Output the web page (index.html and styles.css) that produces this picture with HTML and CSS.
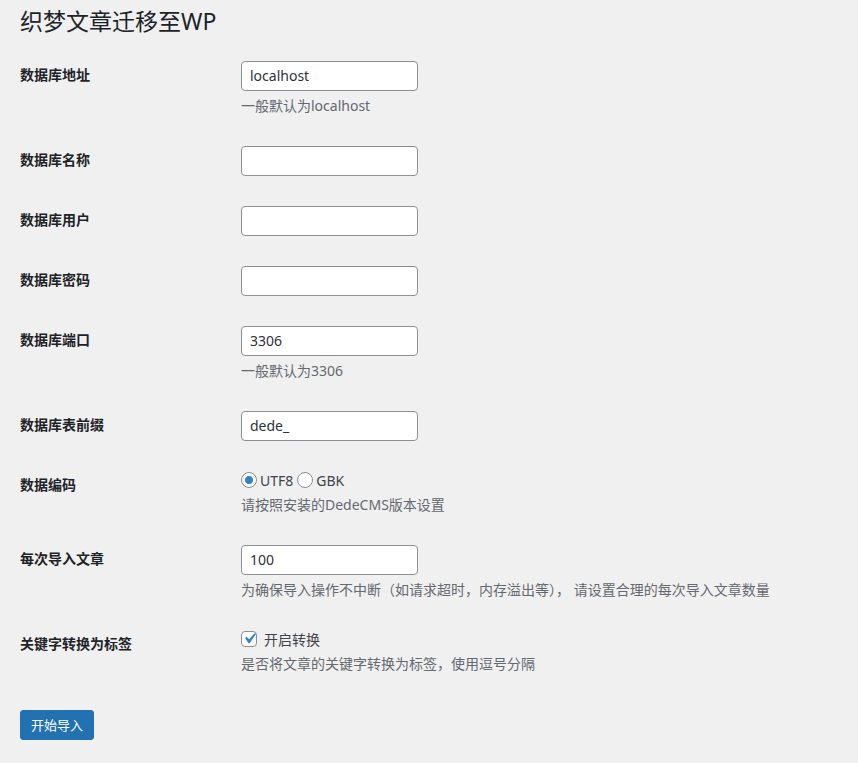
FILE: index.html
```html
<!DOCTYPE html>
<html lang="zh-CN">
<head>
<meta charset="utf-8">
<title>织梦文章迁移至WP</title>
<link rel="stylesheet" href="styles.css">
</head>
<body>
<div class="wrap">
  <h1 class="page-title">织梦文章迁移至WP</h1>
  <form class="import-form">
    <table class="form-table">
      <tbody>
        <tr>
          <th scope="row"><label>数据库地址</label></th>
          <td>
            <input class="field" type="text" value="localhost">
            <p class="description">一般默认为localhost</p>
          </td>
        </tr>
        <tr>
          <th scope="row"><label>数据库名称</label></th>
          <td><input class="field" type="text" value=""></td>
        </tr>
        <tr>
          <th scope="row"><label>数据库用户</label></th>
          <td><input class="field" type="text" value=""></td>
        </tr>
        <tr>
          <th scope="row"><label>数据库密码</label></th>
          <td><input class="field" type="password" value=""></td>
        </tr>
        <tr>
          <th scope="row"><label>数据库端口</label></th>
          <td>
            <input class="field" type="text" value="3306">
            <p class="description">一般默认为3306</p>
          </td>
        </tr>
        <tr>
          <th scope="row"><label>数据库表前缀</label></th>
          <td><input class="field" type="text" value="dede_"></td>
        </tr>
        <tr>
          <th scope="row"><label>数据编码</label></th>
          <td>
            <div class="choice-line"><label class="choice"><input class="radio" type="radio" name="charset" checked>UTF8</label> <label class="choice"><input class="radio" type="radio" name="charset">GBK</label></div>
            <p class="description">请按照安装的DedeCMS版本设置</p>
          </td>
        </tr>
        <tr>
          <th scope="row"><label>每次导入文章</label></th>
          <td>
            <input class="field" type="text" value="100">
            <p class="description">为确保导入操作不中断（如请求超时，内存溢出等）， 请设置合理的每次导入文章数量</p>
          </td>
        </tr>
        <tr>
          <th scope="row"><label>关键字转换为标签</label></th>
          <td>
            <div class="choice-line"><label class="choice"><span class="checkbox"><svg viewBox="0 0 20 20" width="20" height="20" aria-hidden="true"><path d="M14.83 4.89l1.34.94-5.81 8.38H9.02L5.78 9.67l1.34-1.25 2.57 2.4z" fill="#3582c4"/></svg></span> 开启转换</label></div>
            <p class="description">是否将文章的关键字转换为标签，使用逗号分隔</p>
          </td>
        </tr>
      </tbody>
    </table>
    <p class="submit"><button class="button-primary" type="button">开始导入</button></p>
  </form>
</div>
</body>
</html>
```

FILE: styles.css
```css
html, body {
  margin: 0;
  padding: 0;
  background: #f0f0f1;
}

body {
  color: #1d2327;
  font-family: "Noto Sans", "Noto Sans CJK SC", sans-serif;
  font-size: 13px;
  line-height: 1.4;
}

.wrap {
  padding: 0 20px;
}

.page-title {
  margin: 0 0 9px;
  padding: 7px 0 0;
  font-size: 23px;
  font-weight: 400;
  line-height: 1.3;
  color: #1d2327;
}

.import-form {
  margin: 0;
}

.form-table {
  border-collapse: collapse;
  border-spacing: 0;
  margin: 0;
  width: 100%;
  clear: both;
}

.form-table th {
  width: 201px;
  padding: 20px 10px 20px 0;
  text-align: left;
  vertical-align: top;
  font-size: 14px;
  font-weight: 600;
  line-height: 1.3;
  color: #1d2327;
}

.form-table td {
  padding: 15px 10px;
  vertical-align: top;
  font-size: 14px;
  line-height: 1.3;
}

.field {
  display: block;
  box-sizing: border-box;
  width: 177px;
  height: 30px;
  margin: 0;
  padding: 0 8px;
  border: 1px solid #8c8f94;
  border-radius: 4px;
  background: #fff;
  color: #2c3338;
  font-family: "Noto Sans", "Noto Sans CJK SC", sans-serif;
  font-size: 14px;
  line-height: 28px;
  box-shadow: 0 0 0 transparent;
  outline: none;
}

.description {
  margin: 4px 0 0;
  font-size: 14px;
  line-height: 21px;
  color: #646970;
}

.choice-line {
  display: flex;
  align-items: center;
  gap: 4px;
  height: 19px;
  line-height: 19px;
  color: #3c434a;
}

.choice {
  display: inline-flex;
  align-items: center;
}

.radio {
  appearance: none;
  -webkit-appearance: none;
  box-sizing: border-box;
  width: 16px;
  height: 16px;
  margin: 0 3px 0 0;
  border: 1px solid #8c8f94;
  border-radius: 50%;
  background: #fff;
  display: inline-flex;
  align-items: center;
  justify-content: center;
}

.radio:checked::before {
  content: "";
  width: 8px;
  height: 8px;
  border-radius: 50%;
  background: #3582c4;
}

.checkbox {
  box-sizing: border-box;
  width: 16px;
  height: 16px;
  margin-right: 7px;
  border: 1px solid #8c8f94;
  border-radius: 4px;
  background: #fff;
  display: inline-flex;
  align-items: center;
  justify-content: center;
  overflow: visible;
}

.checkbox svg {
  width: 21px;
  height: 21px;
  margin: -2px -3px 0 -3px;
  flex: none;
}

.submit {
  margin: 21px 0 0;
  padding: 0;
}

.button-primary {
  box-sizing: border-box;
  min-height: 30px;
  margin: 0;
  padding: 0 10px;
  border: 1px solid #2271b1;
  border-radius: 3px;
  background: #2271b1;
  color: #fff;
  font-family: "Noto Sans", "Noto Sans CJK SC", sans-serif;
  font-size: 13px;
  line-height: 28px;
  cursor: pointer;
}
```
